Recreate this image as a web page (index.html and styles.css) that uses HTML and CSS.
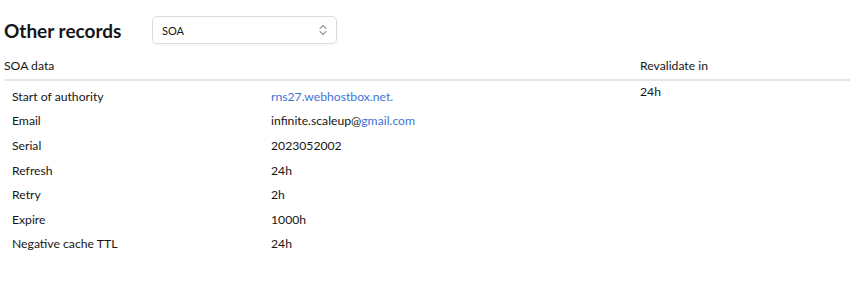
FILE: index.html
```html
<!DOCTYPE html>
<html lang="en">
<head>
<meta charset="UTF-8" />
<meta name="viewport" content="width=device-width, initial-scale=1" />
<title>Other records</title>
<link rel="stylesheet" href="styles.css">
</head>
<body>

<div class="records">
  <div class="records-head">
    <h2>Other records</h2>
    <div class="select-box">
      <span>SOA</span>
      <svg class="chevrons" width="8" height="12" viewBox="0 0 8 12">
        <path d="M1 4.5 L4 1.5 L7 4.5 M1 7.5 L4 10.5 L7 7.5" fill="none" stroke="#999" stroke-width="1.1" stroke-linecap="round" stroke-linejoin="round"/>
      </svg>
    </div>
  </div>

  <table class="records-table">
    <thead>
      <tr>
        <th class="col-data">SOA data</th>
        <th class="col-ttl">Revalidate in</th>
      </tr>
    </thead>
    <tbody>
      <tr>
        <td>
          <table class="soa-table">
            <tr><td>Start of authority</td><td><a href="#">rns27.webhostbox.net.</a></td></tr>
            <tr><td>Email</td><td>infinite.scaleup@<a href="#">gmail.com</a></td></tr>
            <tr><td>Serial</td><td>2023052002</td></tr>
            <tr><td>Refresh</td><td>24h</td></tr>
            <tr><td>Retry</td><td>2h</td></tr>
            <tr><td>Expire</td><td>1000h</td></tr>
            <tr><td>Negative cache TTL</td><td>24h</td></tr>
          </table>
        </td>
        <td class="ttl">24h</td>
      </tr>
    </tbody>
  </table>
</div>

</body>
</html>
```

FILE: styles.css
```css
* {
  box-sizing: border-box;
}
body {
  margin: 0;
  font-family: Lato, "Noto Sans", Arial, sans-serif;
  background: #fff;
  color: #161616;
}
.records {
  padding: 16px 7px 0 4px;
}
/* Başlık ve seçim kutusu */
.records-head {
  display: flex;
  align-items: center;
}
.records-head h2 {
  margin: 0;
  font-size: 19px;
  font-weight: 700;
  width: 148px;
  flex-shrink: 0;
  white-space: nowrap;
}
.select-box {
  width: 185px;
  height: 28px;
  border: 1px solid #dcdcdc;
  border-radius: 5px;
  display: flex;
  align-items: center;
  justify-content: space-between;
  padding: 0 9px;
  font-size: 11px;
  box-shadow: 0 1px 2px rgba(0,0,0,0.05);
}
/* Tablo */
.records-table {
  width: 100%;
  border-collapse: collapse;
  margin-top: 8px;
  font-size: 12.2px;
}
.records-table th {
  text-align: left;
  font-weight: 400;
  padding: 6px 0 6px 0;
  border-bottom: 2px solid #e6e6e6;
}
.col-data {
  width: 636px;
}
.records-table > tbody > tr > td {
  vertical-align: top;
  padding: 3px 0 0 0;
}
.soa-table {
  border-collapse: collapse;
}
.soa-table td {
  padding: 0;
  height: 24.6px;
}
.soa-table td:first-child {
  width: 267px;
  padding-left: 8px;
}
.records-table > tbody > tr > td.ttl {
  padding-top: 3px;
}
a {
  color: #3f74d6;
  text-decoration: none;
}
```
